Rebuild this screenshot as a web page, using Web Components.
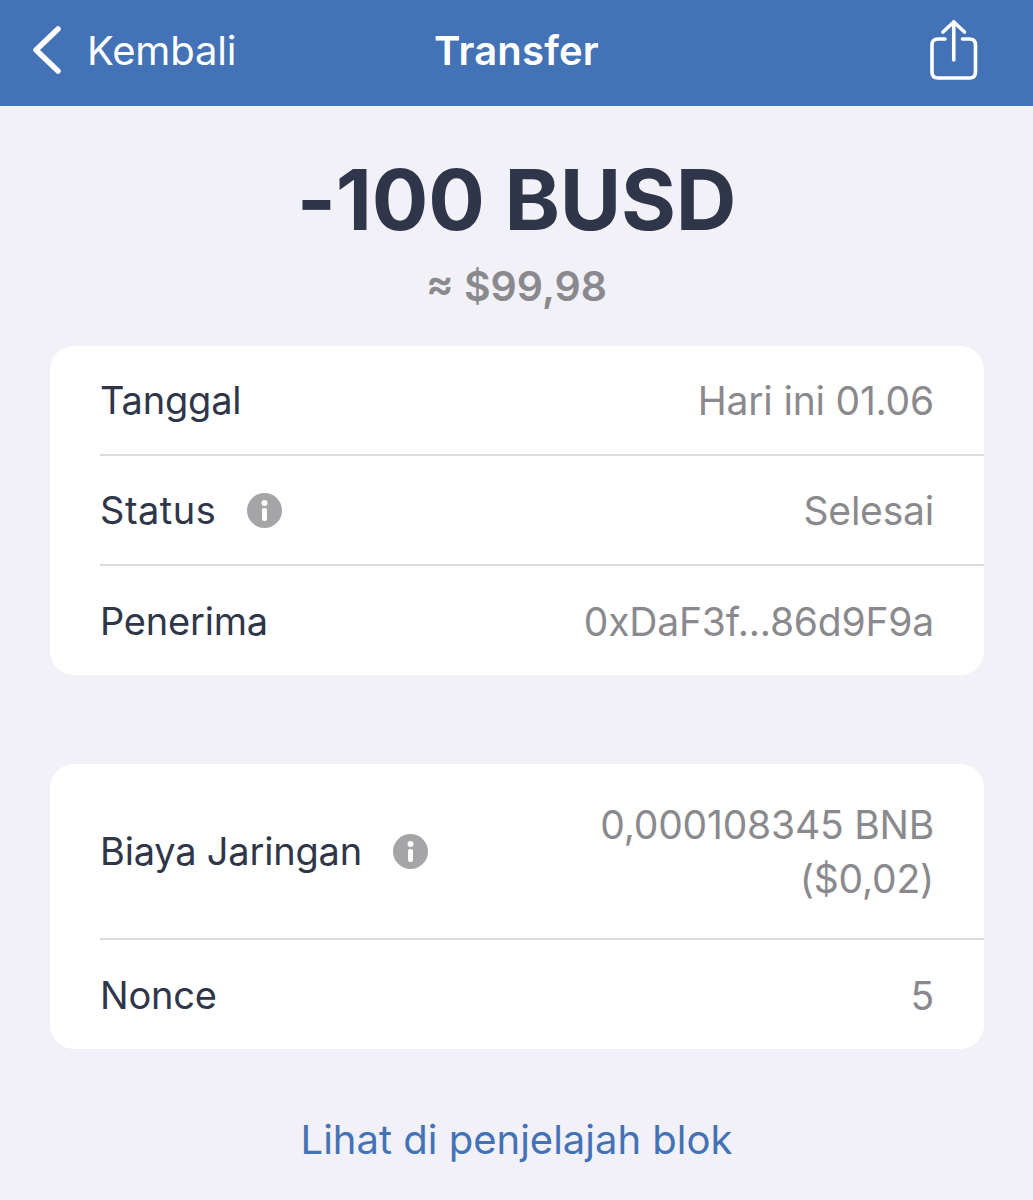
<!DOCTYPE html>
<html>
<head>
<meta charset="utf-8">
<style>
  html, body { margin: 0; padding: 0; }
  body {
    width: 1033px;
    height: 1200px;
    overflow: hidden;
    background: #f1f1f7;
    font-family: Inter, "Liberation Sans", sans-serif;
  }
</style>
</head>
<body>
<nav-bar title="Transfer" back="Kembali"></nav-bar>
<amount-head amount="-100 BUSD" fiat="≈ $99,98"></amount-head>
<info-card>
  <info-row label="Tanggal" value="Hari ini 01.06" height="110"></info-row>
  <info-row label="Status" value="Selesai" info tracking="0.5" height="110"></info-row>
  <info-row label="Penerima" value="0xDaF3f...86d9F9a" height="109" last></info-row>
</info-card>
<info-card class="second">
  <info-row label="Biaya Jaringan" info height="176">0,000108345 BNB<br>($0,02)</info-row>
  <info-row label="Nonce" value="5" height="109" last></info-row>
</info-card>
<explorer-link>Lihat di penjelajah blok</explorer-link>

<script>
class NavBar extends HTMLElement {
  connectedCallback() {
    this.attachShadow({ mode: "open" });
    this.shadowRoot.innerHTML = `
      <style>
        :host {
          display: grid;
          grid-template-columns: 1fr auto 1fr;
          align-items: center;
          height: 106px;
          background: #4472b6;
          color: #fff;
          box-sizing: border-box;
          padding: 0 32px 6px;
        }
        .back { display: flex; align-items: center; gap: 26px; font-size: 40px; letter-spacing: -0.15px; }
        .title { font-size: 40px; font-weight: 600; letter-spacing: 0.2px; }
        .share { justify-self: end; display: flex; margin: 0 23px 0 0; }
        svg { display: block; }
      </style>
      <div class="back">
        <svg width="29" height="48" viewBox="0 0 29 48" fill="none" stroke="#fff" stroke-width="5.5" stroke-linecap="round" stroke-linejoin="round"><path d="M26 3 L4 24 L26 45"/></svg>
        <span>${this.getAttribute("back")}</span>
      </div>
      <div class="title">${this.getAttribute("title")}</div>
      <div class="share">
        <svg width="48" height="60" viewBox="0 0 48 60" fill="none" stroke="#fff" stroke-width="3.6" stroke-linecap="round" stroke-linejoin="round"><path d="M15 19 H8 Q2 19 2 25 V52 Q2 58 8 58 H39.5 Q45.5 58 45.5 52 V25 Q45.5 19 39.5 19 H32.5"/><path d="M23.75 40 V2"/><path d="M13 12 L23.75 2 L34.5 12"/></svg>
      </div>`;
  }
}
customElements.define("nav-bar", NavBar);

class AmountHead extends HTMLElement {
  connectedCallback() {
    this.attachShadow({ mode: "open" });
    this.shadowRoot.innerHTML = `
      <style>
        :host {
          display: flex;
          flex-direction: column;
          align-items: center;
          height: 240px;
          box-sizing: border-box;
          padding-top: 48px;
        }
        .amount { font-size: 84px; line-height: 92px; font-weight: 700; color: #2f3649; letter-spacing: -0.2px; }
        .fiat { font-size: 41px; line-height: 48px; margin-top: 16px; font-weight: 600; color: #8a8a8e; }
      </style>
      <div class="amount">${this.getAttribute("amount")}</div>
      <div class="fiat">${this.getAttribute("fiat")}</div>`;
  }
}
customElements.define("amount-head", AmountHead);

class InfoCard extends HTMLElement {
  connectedCallback() {
    this.attachShadow({ mode: "open" });
    this.shadowRoot.innerHTML = `
      <style>
        :host {
          display: block;
          margin: 0 49px 89px 50px;
          background: #fff;
          border-radius: 24px;
          overflow: hidden;
        }
      </style>
      <slot></slot>`;
  }
}
customElements.define("info-card", InfoCard);

class InfoRow extends HTMLElement {
  connectedCallback() {
    this.attachShadow({ mode: "open" });
    const value = this.getAttribute("value");
    const tracking = this.getAttribute("tracking") || "-0.2";
    this.shadowRoot.innerHTML = `
      <style>
        :host {
          display: flex;
          align-items: center;
          justify-content: space-between;
          height: ${this.getAttribute("height")}px;
          box-sizing: border-box;
          margin-left: 50px;
          padding-right: 50px;
          font-size: 38px;
          ${this.hasAttribute("last") ? "" : "border-bottom: 2px solid #dcdcde;"}
        }
        .label { display: flex; align-items: center; gap: 31px; color: #2f3649; letter-spacing: ${tracking}px; }
        .value { color: #8a8a8e; text-align: right; line-height: 54px; font-size: 39px; letter-spacing: -0.2px; padding-top: 2px; }
        svg { display: block; }
      </style>
      <div class="label">
        <span>${this.getAttribute("label")}</span>
        ${this.hasAttribute("info") ? `<svg width="35" height="35" viewBox="0 0 35 35"><circle cx="17.5" cy="17.5" r="17.5" fill="#a5a5a7"/><circle cx="17.5" cy="10" r="3" fill="#fff"/><rect x="15" y="15" width="5" height="13" rx="2" fill="#fff"/></svg>` : ""}
      </div>
      <div class="value">${value !== null ? value : "<slot></slot>"}</div>`;
  }
}
customElements.define("info-row", InfoRow);

class ExplorerLink extends HTMLElement {
  connectedCallback() {
    this.attachShadow({ mode: "open" });
    this.shadowRoot.innerHTML = `
      <style>
        :host {
          display: block;
          text-align: center;
          font-size: 40px;
          line-height: 48px;
          margin-top: -22px;
          color: #4472b6;
        }
      </style>
      <slot></slot>`;
  }
}
customElements.define("explorer-link", ExplorerLink);
</script>
</body>
</html>
